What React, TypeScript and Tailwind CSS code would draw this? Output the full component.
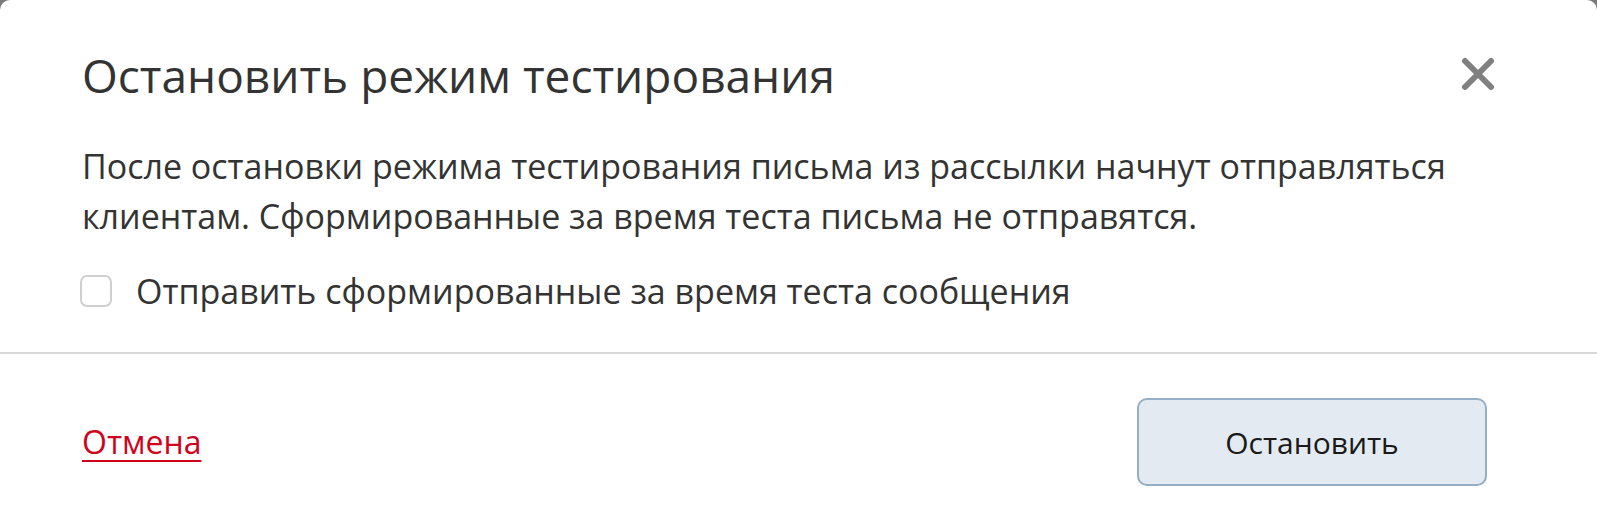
export default function App() {
  return (
    <div className="h-[522px] w-full overflow-hidden bg-[#7a7a7a]" style={{ fontFamily: '"Open Sans", "Noto Sans", sans-serif' }}>
      <div className="flex h-full flex-col rounded-t-[10px] bg-white">
        <div className="flex items-start justify-between pl-[82px] pr-[102px] pt-[45px]">
          <h2 className="text-[46px] leading-[60px] text-[#333333]">Остановить режим тестирования</h2>
          <button className="mt-[12px] text-[#808080]" aria-label="Закрыть">
            <svg width="34" height="34" viewBox="0 0 34 34">
              <path d="M4 4 L30 30 M30 4 L4 30" stroke="currentColor" strokeWidth="6" strokeLinecap="round" />
            </svg>
          </button>
        </div>
        <div className="pl-[82px] pr-[100px] pt-[36px]">
          <p className="text-[34px] leading-[50px] text-[#333333]">
            После остановки режима тестирования письма из рассылки начнут отправляться клиентам. Сформированные за время теста письма не отправятся.
          </p>
          <label className="mt-[28px] flex items-center gap-[24px]">
            <span className="ml-[-2px] h-[32px] w-[32px] shrink-0 rounded-[7px] border-2 border-[#cfcfcf] bg-white" />
            <span className="text-[34px] leading-[44px] text-[#333333]">Отправить сформированные за время теста сообщения</span>
          </label>
        </div>
        <div className="mt-[39px] h-[2px] shrink-0 bg-[#d9d9d9]" />
        <div className="flex flex-1 items-center justify-between pl-[82px] pr-[110px] pt-[8px]">
          <a href="#" className="text-[32px] text-[#d0021b] underline decoration-2 underline-offset-[6px]">Отмена</a>
          <button className="h-[88px] w-[350px] rounded-[10px] border-2 border-[#94aec4] bg-[#e3eaf1] text-[30px] text-[#1a1a1a]">
            Остановить
          </button>
        </div>
      </div>
    </div>
  );
}
